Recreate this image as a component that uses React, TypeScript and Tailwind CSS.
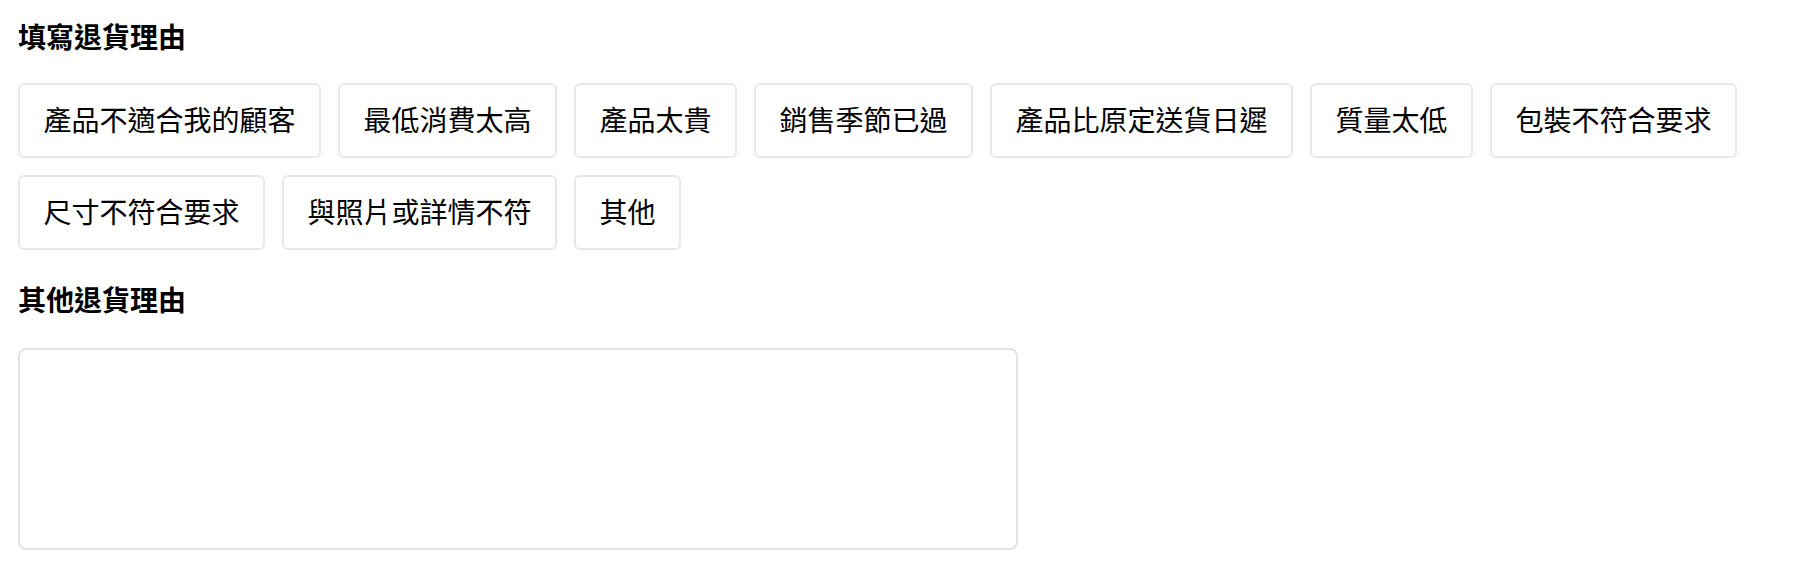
import React, { useState } from 'react';

const reasons = [
  '產品不適合我的顧客',
  '最低消費太高',
  '產品太貴',
  '銷售季節已過',
  '產品比原定送貨日遲',
  '質量太低',
  '包裝不符合要求',
  '尺寸不符合要求',
  '與照片或詳情不符',
  '其他',
];

export default function App() {
  const [selected, setSelected] = useState<string | null>(null);
  const [note, setNote] = useState('');

  return (
    <div
      className="min-h-screen bg-white px-[18px] pt-[15px] text-black"
      style={{ fontFamily: '"Noto Sans CJK TC", "Noto Sans", sans-serif' }}
    >
      {/* 退貨理由 */}
      <h2 className="text-[28px] font-bold leading-[42px]">填寫退貨理由</h2>

      <div className="mt-[26px] flex flex-wrap gap-x-[17px] gap-y-[17px]">
        {reasons.map((reason) => (
          <button
            key={reason}
            type="button"
            onClick={() => setSelected(reason)}
            className={`flex h-[75px] items-center rounded-[6px] border-2 bg-white px-[23.5px] pb-[4px] text-[28px] leading-[42px] ${
              selected === reason ? 'border-black' : 'border-[#e8e8e8]'
            }`}
          >
            {reason}
          </button>
        ))}
      </div>

      {/* 其他理由 */}
      <h2 className="mt-[28px] text-[28px] font-bold leading-[42px]">其他退貨理由</h2>

      <textarea
        value={note}
        onChange={(e) => setNote(e.target.value)}
        className="mt-[28px] block h-[202px] w-[1000px] resize-none rounded-[8px] border-2 border-[#e3e3e3] p-4 text-[28px] outline-none"
      />
    </div>
  );
}
